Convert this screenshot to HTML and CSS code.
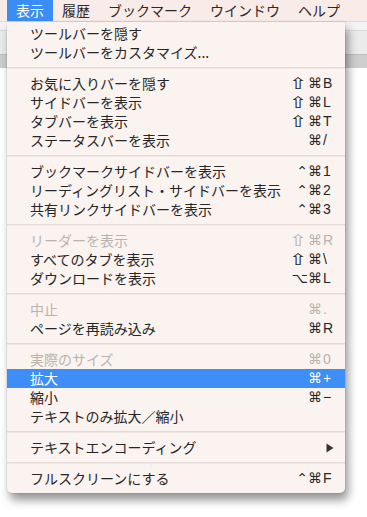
FILE: index.html
```html
<!DOCTYPE html>
<html lang="ja">
<head>
<meta charset="utf-8">
<link rel="stylesheet" href="styles.css">
</head>
<body>
<div class="screen">
  <div class="menubar">
    <span class="title active">表示</span>
    <span class="title">履歴</span>
    <span class="title">ブックマーク</span>
    <span class="title">ウインドウ</span>
    <span class="title">ヘルプ</span>
  </div>
  <div class="window">
    <div class="tb tb1"></div>
    <div class="tb tb2"></div>
    <div class="tb tb3"></div>
    <div class="page"></div>
  </div>

  <div class="menu">
    <div class="item"><span class="label">ツールバーを隠す</span></div>
    <div class="item"><span class="label">ツールバーをカスタマイズ...</span></div>
    <div class="sep"></div>
    <div class="item"><span class="label">お気に入りバーを隠す</span><span class="sc"><span class="mod"><span class="shift">⇧</span>⌘</span><span class="key">B</span></span></div>
    <div class="item"><span class="label">サイドバーを表示</span><span class="sc"><span class="mod"><span class="shift">⇧</span>⌘</span><span class="key">L</span></span></div>
    <div class="item"><span class="label">タブバーを表示</span><span class="sc"><span class="mod"><span class="shift">⇧</span>⌘</span><span class="key">T</span></span></div>
    <div class="item"><span class="label">ステータスバーを表示</span><span class="sc"><span class="mod">⌘</span><span class="key">/</span></span></div>
    <div class="sep"></div>
    <div class="item"><span class="label">ブックマークサイドバーを表示</span><span class="sc"><span class="mod">⌃⌘</span><span class="key">1</span></span></div>
    <div class="item"><span class="label">リーディングリスト・サイドバーを表示</span><span class="sc"><span class="mod">⌃⌘</span><span class="key">2</span></span></div>
    <div class="item"><span class="label">共有リンクサイドバーを表示</span><span class="sc"><span class="mod">⌃⌘</span><span class="key">3</span></span></div>
    <div class="sep"></div>
    <div class="item disabled"><span class="label">リーダーを表示</span><span class="sc"><span class="mod"><span class="shift">⇧</span>⌘</span><span class="key">R</span></span></div>
    <div class="item"><span class="label">すべてのタブを表示</span><span class="sc"><span class="mod"><span class="shift">⇧</span>⌘</span><span class="key">\</span></span></div>
    <div class="item"><span class="label">ダウンロードを表示</span><span class="sc"><span class="mod">⌥⌘</span><span class="key">L</span></span></div>
    <div class="sep"></div>
    <div class="item disabled"><span class="label">中止</span><span class="sc"><span class="mod">⌘</span><span class="key">.</span></span></div>
    <div class="item"><span class="label">ページを再読み込み</span><span class="sc"><span class="mod">⌘</span><span class="key">R</span></span></div>
    <div class="sep"></div>
    <div class="item disabled"><span class="label">実際のサイズ</span><span class="sc"><span class="mod">⌘</span><span class="key">0</span></span></div>
    <div class="item selected"><span class="label">拡大</span><span class="sc"><span class="mod">⌘</span><span class="key">+</span></span></div>
    <div class="item"><span class="label">縮小</span><span class="sc"><span class="mod">⌘</span><span class="key">−</span></span></div>
    <div class="item"><span class="label">テキストのみ拡大／縮小</span></div>
    <div class="sep"></div>
    <div class="item"><span class="label">テキストエンコーディング</span><span class="sc"><span class="key arrow"><svg width="8" height="10" viewBox="0 0 8 10"><path d="M0.5 0.5 L7.5 5 L0.5 9.5 Z" fill="#333"/></svg></span></span></div>
    <div class="sep"></div>
    <div class="item"><span class="label">フルスクリーンにする</span><span class="sc"><span class="mod">⌃⌘</span><span class="key">F</span></span></div>
  </div>
</div>
</body>
</html>
```

FILE: styles.css
```css
html, body {
  margin: 0;
  padding: 0;
}
body {
  width: 367px;
  height: 517px;
  overflow: hidden;
  background: #ffffff;
  font-family: "Noto Sans CJK JP", "Noto Sans", sans-serif;
  color: #262626;
}
.screen {
  position: relative;
  width: 367px;
  height: 517px;
}
.menubar {
  display: flex;
  height: 21px;
  padding-left: 7px;
  background: #f8ebe8;
  border-bottom: 1px solid #e6d8d4;
}
.title {
  padding: 0 9px;
  font-size: 14px;
  line-height: 21px;
  color: #2a2a2a;
}
.title.active {
  background: #3b8cf5;
  color: #ffffff;
}
.window {
  display: flex;
  flex-direction: column;
}
.tb1 {
  height: 8px;
  background: #f3f3f3;
}
.tb2 {
  height: 23px;
  background: #ebebeb;
  border-top: 1px solid #d9d9d9;
}
.tb3 {
  height: 13px;
  background: #cecece;
  border-top: 1px solid #bdbdbd;
}
.page {
  height: 440px;
  background: #ffffff;
}
.menu {
  position: absolute;
  top: 22px;
  left: 7px;
  width: 338px;
  padding: 2px 0 5px;
  background: #faf3ef;
  border-radius: 0 0 5px 5px;
  box-shadow: 3px 7px 10px rgba(0, 0, 0, 0.42), 0 0 0 1px rgba(0, 0, 0, 0.06);
}
.item {
  display: flex;
  align-items: center;
  justify-content: space-between;
  height: 19px;
  padding: 0 11px 0 23px;
  font-size: 14px;
  line-height: 19px;
  white-space: nowrap;
}
.item.disabled {
  color: #b9b3b0;
}
.item.selected {
  background: #3d8ef7;
  color: #ffffff;
}
.sc {
  display: flex;
  align-items: center;
  font-family: "DejaVu Sans", "Liberation Sans", sans-serif;
  font-size: 14px;
}
.mod {
  display: flex;
  align-items: center;
  justify-content: flex-end;
  gap: 2px;
  padding-right: 1px;
}
.shift {
  display: inline-block;
  font-size: 16px;
  transform: scaleX(1.35);
  margin-right: 2px;
}
.key {
  width: 11px;
  text-align: left;
  font-family: "Liberation Sans", "DejaVu Sans", sans-serif;
  font-size: 14px;
}
.arrow {
  display: flex;
  align-items: center;
  padding-left: 3px;
  width: 8px;
}
.sep {
  height: 12px;
  display: flex;
  align-items: center;
}
.sep::before {
  content: "";
  display: block;
  width: 100%;
  height: 1px;
  background: #e4dbd6;
  border-bottom: 1px solid #efe7e2;
}
```
